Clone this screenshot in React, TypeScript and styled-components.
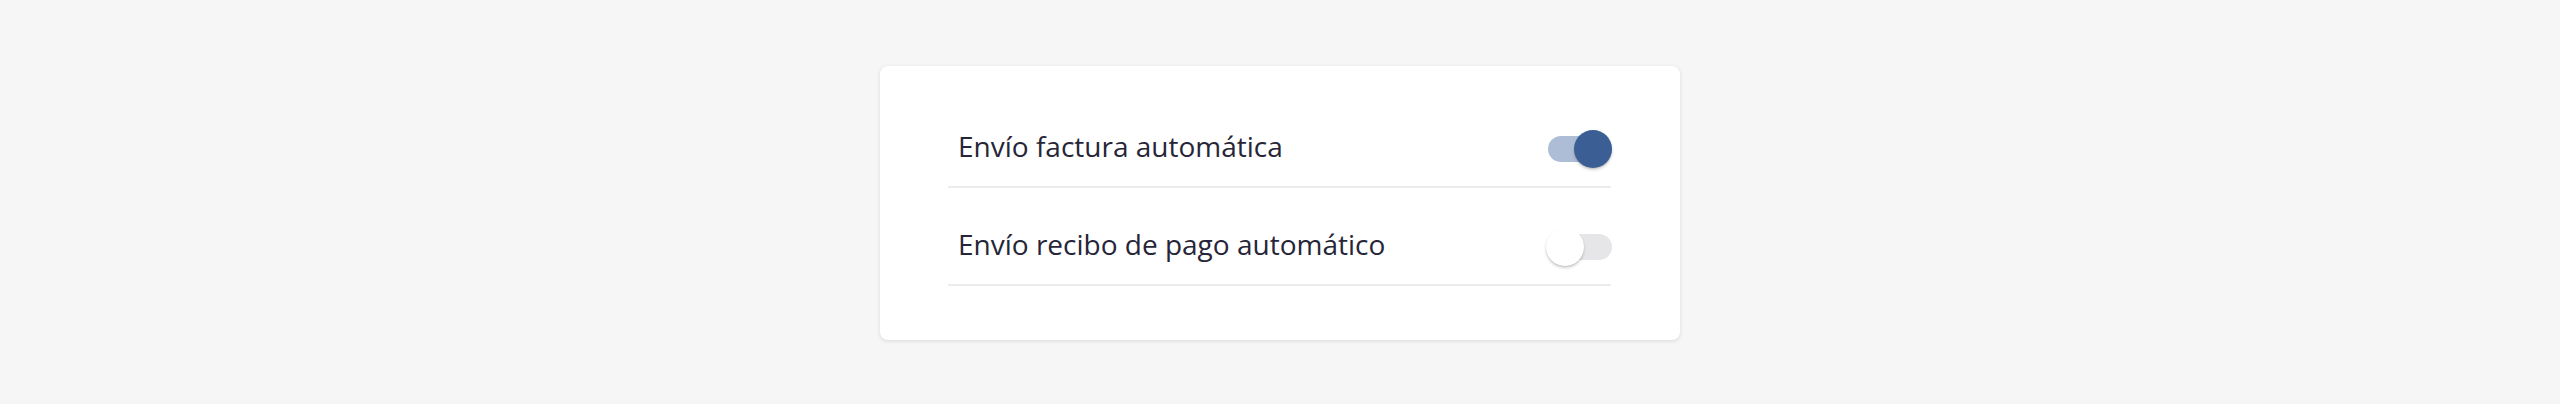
import React, { useState } from "react";
import styled, { createGlobalStyle } from "styled-components";

const GlobalStyle = createGlobalStyle`
  html, body {
    margin: 0;
    padding: 0;
    background: #f6f6f6;
  }
  body {
    font-family: "Open Sans", "Noto Sans", sans-serif;
  }
`;

const Page = styled.div`
  width: 100%;
  height: 404px;
  display: flex;
  justify-content: center;
  padding-top: 66px;
  box-sizing: border-box;
`;

const Card = styled.div`
  width: 800px;
  height: 274px;
  box-sizing: border-box;
  background: #ffffff;
  border-radius: 8px;
  box-shadow: 0 1px 4px rgba(0, 0, 0, 0.12);
  padding: 24px 69px 0 68px;
`;

const Row = styled.div`
  height: 98px;
  box-sizing: border-box;
  display: flex;
  align-items: center;
  justify-content: space-between;
  padding: 41px 0 19px 10px;
  border-bottom: 2px solid #ececec;
`;

const Label = styled.span`
  font-size: 28px;
  color: #262638;
  line-height: 38px;
  margin-top: -7px;
`;

const Track = styled.button<{ $on: boolean }>`
  position: relative;
  width: 64px;
  height: 26px;
  padding: 0;
  border: none;
  border-radius: 13px;
  cursor: pointer;
  background: ${(p) => (p.$on ? "#aebdd6" : "#e6e6e9")};
  margin-right: -1px;
`;

const Knob = styled.span<{ $on: boolean }>`
  position: absolute;
  top: 50%;
  left: ${(p) => (p.$on ? "26px" : "-2px")};
  width: 38px;
  height: 38px;
  margin-top: -19px;
  border-radius: 50%;
  background: ${(p) => (p.$on ? "#3b5f95" : "#ffffff")};
  box-shadow: 0 2px 3px rgba(0, 0, 0, 0.18), 0 1px 1px rgba(0, 0, 0, 0.08);
`;

function Toggle({ on, onChange }: { on: boolean; onChange: () => void }) {
  return (
    <Track $on={on} onClick={onChange} aria-pressed={on}>
      <Knob $on={on} />
    </Track>
  );
}

export default function App() {
  const [factura, setFactura] = useState(true);
  const [recibo, setRecibo] = useState(false);

  return (
    <Page>
      <GlobalStyle />
      <Card>
        <Row>
          <Label>Envío factura automática</Label>
          <Toggle on={factura} onChange={() => setFactura(!factura)} />
        </Row>
        <Row>
          <Label>Envío recibo de pago automático</Label>
          <Toggle on={recibo} onChange={() => setRecibo(!recibo)} />
        </Row>
      </Card>
    </Page>
  );
}
